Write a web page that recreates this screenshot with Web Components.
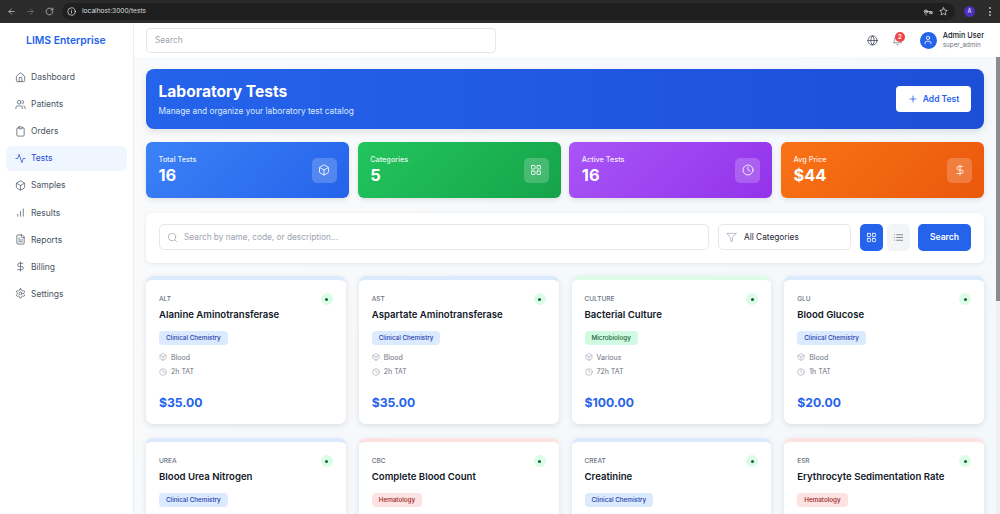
<!DOCTYPE html>
<html><head><meta charset="utf-8"><style>
html,body{margin:0;padding:0;height:514px;overflow:hidden;font-family:Inter,"Liberation Sans",sans-serif;background:#f9fafb}
lims-app{display:block;width:1000px;height:514px}
</style></head><body>
<lims-app></lims-app>
<script>
const I={
home:'<path d="M15 21v-8a1 1 0 0 0-1-1h-4a1 1 0 0 0-1 1v8"/><path d="M3 10a2 2 0 0 1 .709-1.528l7-5.999a2 2 0 0 1 2.582 0l7 5.999A2 2 0 0 1 21 10v9a2 2 0 0 1-2 2H5a2 2 0 0 1-2-2z"/>',
users:'<path d="M16 21v-2a4 4 0 0 0-4-4H6a4 4 0 0 0-4 4v2"/><circle cx="9" cy="7" r="4"/><path d="M22 21v-2a4 4 0 0 0-3-3.87"/><path d="M16 3.13a4 4 0 0 1 0 7.75"/>',
clip:'<rect x="8" y="2" width="8" height="4" rx="1"/><path d="M16 4h2a2 2 0 0 1 2 2v14a2 2 0 0 1-2 2H6a2 2 0 0 1-2-2V6a2 2 0 0 1 2-2h2"/>',
activity:'<path d="M22 12h-4l-3 9L9 3l-3 9H2"/>',
box:'<path d="M21 8a2 2 0 0 0-1-1.73l-7-4a2 2 0 0 0-2 0l-7 4A2 2 0 0 0 3 8v8a2 2 0 0 0 1 1.73l7 4a2 2 0 0 0 2 0l7-4A2 2 0 0 0 21 16Z"/><path d="m3.3 7 8.7 5 8.7-5"/><path d="M12 22V12"/>',
chart:'<path d="M12 20V10"/><path d="M18 20V4"/><path d="M6 20v-4"/>',
file:'<path d="M15 2H6a2 2 0 0 0-2 2v16a2 2 0 0 0 2 2h12a2 2 0 0 0 2-2V7Z"/><path d="M14 2v4a2 2 0 0 0 2 2h4"/><path d="M16 13H8"/><path d="M16 17H8"/><path d="M10 9H8"/>',
dollar:'<path d="M12 2v20"/><path d="M17 5H9.5a3.5 3.5 0 0 0 0 7h5a3.5 3.5 0 0 1 0 7H6"/>',
gear:'<path d="M12.22 2h-.44a2 2 0 0 0-2 2v.18a2 2 0 0 1-1 1.73l-.43.25a2 2 0 0 1-2 0l-.15-.08a2 2 0 0 0-2.73.73l-.22.38a2 2 0 0 0 .73 2.73l.15.1a2 2 0 0 1 1 1.72v.51a2 2 0 0 1-1 1.74l-.15.09a2 2 0 0 0-.73 2.73l.22.38a2 2 0 0 0 2.73.73l.15-.08a2 2 0 0 1 2 0l.43.25a2 2 0 0 1 1 1.73V20a2 2 0 0 0 2 2h.44a2 2 0 0 0 2-2v-.18a2 2 0 0 1 1-1.73l.43-.25a2 2 0 0 1 2 0l.15.08a2 2 0 0 0 2.73-.73l.22-.39a2 2 0 0 0-.73-2.73l-.15-.08a2 2 0 0 1-1-1.74v-.5a2 2 0 0 1 1-1.74l.15-.09a2 2 0 0 0 .73-2.73l-.22-.38a2 2 0 0 0-2.73-.73l-.15.08a2 2 0 0 1-2 0l-.43-.25a2 2 0 0 1-1-1.73V4a2 2 0 0 0-2-2z"/><circle cx="12" cy="12" r="3"/>',
globe:'<circle cx="12" cy="12" r="10"/><path d="M12 2a14.5 14.5 0 0 0 0 20 14.5 14.5 0 0 0 0-20"/><path d="M2 12h20"/>',
bell:'<path d="M6 8a6 6 0 0 1 12 0c0 7 3 9 3 9H3s3-2 3-9"/><path d="M10.3 21a1.94 1.94 0 0 0 3.4 0"/>',
user:'<path d="M19 21v-2a4 4 0 0 0-4-4H9a4 4 0 0 0-4 4v2"/><circle cx="12" cy="7" r="4"/>',
grid:'<rect width="7" height="7" x="3" y="3" rx="1"/><rect width="7" height="7" x="14" y="3" rx="1"/><rect width="7" height="7" x="14" y="14" rx="1"/><rect width="7" height="7" x="3" y="14" rx="1"/>',
clock:'<circle cx="12" cy="12" r="10"/><path d="M12 6v6l4 2"/>',
plus:'<path d="M5 12h14"/><path d="M12 5v14"/>',
search:'<circle cx="11" cy="11" r="8"/><path d="m21 21-4.3-4.3"/>',
filter:'<path d="M22 3H2l8 9.46V19l4 2v-8.54z"/>',
list:'<path d="M8 6h13"/><path d="M8 12h13"/><path d="M8 18h13"/><path d="M3 6h.01"/><path d="M3 12h.01"/><path d="M3 18h.01"/>',
back:'<path d="M19 12H5"/><path d="m12 19-7-7 7-7"/>',
fwd:'<path d="M5 12h14"/><path d="m12 5 7 7-7 7"/>',
reload:'<path d="M21 12a9 9 0 1 1-3-6.7L21 8"/><path d="M21 3v5h-5"/>',
info:'<circle cx="12" cy="12" r="10"/><path d="M12 16v-5"/><path d="M12 8h.01"/>',
star:'<path d="m12 2 3.1 6.3 6.9 1-5 4.9 1.2 6.8-6.2-3.2L5.8 21 7 14.2 2 9.3l6.9-1z"/>',
key:'<circle cx="7" cy="11" r="4"/><circle cx="7" cy="11" r="1"/><path d="M11 11h11v5h-3v-3h-3v3"/><path d="M5 19h.01M9 19h.01"/>'
};
const svg=(n,s,c='currentColor',w=2)=>`<svg xmlns="http://www.w3.org/2000/svg" width="${s}" height="${s}" viewBox="0 0 24 24" fill="none" stroke="${c}" stroke-width="${w}" stroke-linecap="round" stroke-linejoin="round" style="display:block;flex:none">${I[n]}</svg>`;
function def(name,css,html){
  customElements.define(name,class extends HTMLElement{
    connectedCallback(){
      if(this.shadowRoot)return;
      const r=this.attachShadow({mode:'open'});
      const a={};for(const x of this.attributes)a[x.name]=x.value;
      r.innerHTML=`<style>${css}</style>`+(typeof html==='function'?html(a):html);
    }
  });
}
def('browser-bar',`:host{display:flex;align-items:center;height:23px;background:#2b2b2b;color:#c7c7c7;flex:none;box-sizing:border-box;padding:0 5px 0 2px}
.b{width:19px;display:flex;justify-content:center}.dim{color:#777}
.url{display:flex;align-items:center;flex:1;height:17px;background:#1f1f1f;border-radius:9px;margin-left:3px;padding:0 7px 0 5px;font:6.6px/1 Inter,sans-serif;color:#dcdcdc;gap:6px}
.sp{flex:1}.av{width:11px;height:11px;border-radius:50%;background:#4a2fb8;color:#d8d0ff;font:600 5.5px/11px Inter,sans-serif;text-align:center;margin:0 10px 0 9px}
.dots{width:10px;display:flex;flex-direction:column;gap:1.5px;align-items:center}.dots i{width:2px;height:2px;background:#bbb;border-radius:50%}`,
`<span class="b">${svg('back',9)}</span><span class="b dim">${svg('fwd',9)}</span><span class="b">${svg('reload',9)}</span>
<div class="url">${svg('info',9)}<span>localhost:3000/tests</span><span class="sp"></span>${svg('key',10)}${svg('star',9)}</div>
<span class="av">A</span><span class="dots"><i></i><i></i><i></i></span>`);
def('nav-item',`:host{display:flex;align-items:center;height:25px;gap:5px;padding:0 9px;border-radius:6px;font-size:8.5px;color:#4b5563;margin-bottom:2.1px}
:host([active]){background:#eff6ff;color:#1d4ed8}`,a=>`${svg(a.icon,11,'currentColor',1.6)}<span>${a.label}</span>`);
def('side-bar',`:host{display:block;width:134px;box-sizing:border-box;background:#fff;border-right:1px solid #eceef1;flex:none}
.logo{height:34px;display:flex;align-items:center;padding-left:26px;font-size:10.4px;font-weight:600;color:#2563eb}
nav{padding:7.6px 6px 0 6px;display:block}`,
`<div class="logo">LIMS Enterprise</div><nav>
<nav-item icon="home" label="Dashboard"></nav-item><nav-item icon="users" label="Patients"></nav-item><nav-item icon="clip" label="Orders"></nav-item><nav-item icon="activity" label="Tests" active></nav-item><nav-item icon="box" label="Samples"></nav-item><nav-item icon="chart" label="Results"></nav-item><nav-item icon="file" label="Reports"></nav-item><nav-item icon="dollar" label="Billing"></nav-item><nav-item icon="gear" label="Settings"></nav-item></nav>`);
def('top-bar',`:host{display:flex;align-items:center;height:34px;background:#fff;flex:none;padding:0 16px 0 12px;box-sizing:border-box}
.s{width:350px;height:25px;box-sizing:border-box;border:1px solid #e5e7eb;border-radius:4px;display:flex;align-items:center;padding-left:8px;font-size:8.3px;color:#9ca3af}
.sp{flex:1}.ic{color:#374151;position:relative}.bell{margin-left:16px;color:#6b7280}
.bd{position:absolute;top:-3px;right:-2px;width:10px;height:10px;border-radius:50%;background:#ef4444;color:#fff;font:600 6.5px/10px Inter,sans-serif;text-align:center}
.av{width:17px;height:17px;border-radius:50%;background:#2563eb;display:flex;align-items:center;justify-content:center;margin:0 6px 0 17px;color:#fff}
.n{font-size:7.4px;font-weight:500;color:#111827;line-height:10px}.r{font-size:6.3px;color:#6b7280;line-height:9px}`,
`<div class="s">Search</div><span class="sp"></span><span class="ic" style="margin-right:-1px;left:1px">${svg('globe',11,'currentColor',1.6)}</span>
<span class="ic bell">${svg('bell',11,'currentColor',1.6)}<span class="bd">2</span></span><span class="av">${svg('user',10,'#fff',2)}</span><div><div class="n">Admin User</div><div class="r">super_admin</div></div>`);
def('hero-banner',`:host{display:flex;align-items:center;justify-content:space-between;height:60px;border-radius:8px;padding:0 13px 0 12.5px;box-sizing:border-box;background:linear-gradient(90deg,#2563eb,#1d4ed8);box-shadow:0 3px 7px rgba(0,0,0,.1);color:#fff}
h1{margin:.5px 0 0;font-size:15.6px;font-weight:700;line-height:20px}p{margin:3.5px 0 0;font-size:8.3px;color:#dbeafe;line-height:12px}
.b{background:#fff;color:#2563eb;border-radius:4px;height:26px;width:75px;display:flex;align-items:center;justify-content:center;gap:5px;font-size:8.5px;font-weight:600}`,
`<div><h1>Laboratory Tests</h1><p>Manage and organize your laboratory test catalog</p></div><div class="b">${svg('plus',10,'#2563eb',2)}Add Test</div>`);
def('stat-card',`:host{display:flex;align-items:center;justify-content:space-between;height:56px;border-radius:6px;padding:0 12px 0 12.5px;box-sizing:border-box;color:#fff;box-shadow:0 2px 5px rgba(0,0,0,.1)}
.l{font-size:7.3px;line-height:9px;opacity:.88;font-weight:500}.v{font-size:16.4px;font-weight:700;line-height:20px;margin-top:1px}
.i{width:25px;height:25px;border-radius:5px;background:rgba(255,255,255,.2);display:flex;align-items:center;justify-content:center}`,
a=>`<div><div class="l">${a.label}</div><div class="v">${a.value}</div></div><div class="i">${svg(a.icon,12,'#fff',1.7)}</div>`);
def('filter-bar',`:host{display:flex;align-items:center;height:50px;border-radius:6px;background:#fff;padding:0 13px 2px 13px;box-sizing:border-box;box-shadow:0 1px 4px rgba(0,0,0,.08);gap:9px}
.f{height:26px;box-sizing:border-box;border:1px solid #e5e7eb;border-radius:5px;display:flex;align-items:center;font-size:8.3px}
.q{flex:1;padding-left:7px;gap:6px;color:#9ca3af}.c{width:133px;padding-left:7px;gap:7px;color:#1f2937}
.t{display:flex;gap:4px}.v{width:23px;height:27px;border-radius:5px;display:flex;align-items:center;justify-content:center}
.on{background:#2563eb}.off{background:#f3f4f6}
.go{width:53px;height:27px;margin-left:-1px;border-radius:5px;background:#2563eb;color:#fff;font-size:8.6px;font-weight:600;display:flex;align-items:center;justify-content:center}`,
`<div class="f q">${svg('search',11,'#9ca3af',1.6)}<span>Search by name, code, or description...</span></div>
<div class="f c">${svg('filter',11,'#9ca3af',1.5)}<span>All Categories</span></div>
<div class="t"><div class="v on">${svg('grid',11,'#fff',1.8)}</div><div class="v off">${svg('list',11,'#6b7280',1.8)}</div></div><div class="go">Search</div>`);
const P={chem:['#dbeafe','#1e40af','#dbeafe'],micro:['#d1fae5','#166534','#dcfce7'],hema:['#fee2e2','#991b1b','#fee2e2']};
def('test-card',`:host{display:block;position:relative;height:148px;border-radius:7px;background:#fff;box-shadow:0 2px 6px rgba(0,0,0,.1);box-sizing:border-box;padding:14.5px 13px 0;border-top:4px solid var(--bar);overflow:hidden}
.code{font-size:6.5px;color:#6b7280;line-height:9px;font-weight:500}
.dot{position:absolute;right:13px;top:13px;width:12px;height:12px;border-radius:50%;background:#dcfce7;display:flex;align-items:center;justify-content:center}.dot i{width:3px;height:3px;border-radius:50%;background:#166534}
h3{margin:4px 0 0;font-size:9.6px;line-height:14px;font-weight:600;color:#111827}
.pill{display:inline-block;margin-top:9.5px;height:14px;line-height:14px;padding:0 7px;border-radius:4px;font-size:6.3px;font-weight:500}
.r{display:flex;align-items:center;gap:4px;font-size:7px;color:#6b7280;height:14.5px}
.rs{margin-top:5px}
.price{margin-top:15px;font-size:12.2px;font-weight:700;color:#2563eb;line-height:18px}`,
a=>{const p=P[a.kind];return `<style>:host{--bar:${p[2]}}.pill{background:${p[0]};color:${p[1]}}</style><span class="dot"><i></i></span><div class="code">${a.code}</div><h3>${a.name}</h3><span class="pill">${a.cat}</span>
<div class="rs"><div class="r">${svg('box',8,'#9ca3af',1.8)}<span>${a.spec}</span></div><div class="r">${svg('clock',8,'#9ca3af',1.8)}<span>${a.tat} TAT</span></div></div><div class="price">${a.price}</div>`});
def('lims-app',`:host{display:flex;flex-direction:column;width:1000px;height:514px;overflow:hidden}
.row{flex:1;display:flex;min-height:0}.col{flex:1;display:flex;flex-direction:column;min-width:0;position:relative}
main{flex:1;overflow:hidden;padding:12px 16px 0 12px;background:linear-gradient(135deg,#f9fafb,#f3f8fc);box-sizing:border-box}
.stats{display:grid;grid-template-columns:repeat(4,1fr);gap:8.7px;margin-top:13px}.stats>:nth-child(1){background:linear-gradient(135deg,#3b82f6,#2563eb)}.stats>:nth-child(2){background:linear-gradient(135deg,#22c55e,#16a34a)}.stats>:nth-child(3){background:linear-gradient(135deg,#a855f7,#9333ea)}.stats>:nth-child(4){background:linear-gradient(135deg,#f97316,#ea580c)}
filter-bar{margin-top:15px}
.grid{display:grid;grid-template-columns:repeat(4,1fr);gap:14px 13px;margin-top:13px}
.sb{position:absolute;right:0;top:34px;bottom:0;width:4px;background:#f1f1f1}.sb i{display:block;width:4px;height:244px;background:#8c8c8c}`,
`<browser-bar></browser-bar><div class="row"><side-bar></side-bar><div class="col"><top-bar></top-bar><main>
<hero-banner></hero-banner>
<div class="stats"><stat-card label="Total Tests" value="16" icon="box"></stat-card><stat-card label="Categories" value="5" icon="grid"></stat-card><stat-card label="Active Tests" value="16" icon="clock"></stat-card><stat-card label="Avg Price" value="$44" icon="dollar"></stat-card></div>
<filter-bar></filter-bar>
<div class="grid">
<test-card kind="chem" code="ALT" name="Alanine Aminotransferase" cat="Clinical Chemistry" spec="Blood" tat="2h" price="$35.00"></test-card>
<test-card kind="chem" code="AST" name="Aspartate Aminotransferase" cat="Clinical Chemistry" spec="Blood" tat="2h" price="$35.00"></test-card>
<test-card kind="micro" code="CULTURE" name="Bacterial Culture" cat="Microbiology" spec="Various" tat="72h" price="$100.00"></test-card>
<test-card kind="chem" code="GLU" name="Blood Glucose" cat="Clinical Chemistry" spec="Blood" tat="1h" price="$20.00"></test-card>
<test-card kind="chem" code="UREA" name="Blood Urea Nitrogen" cat="Clinical Chemistry" spec="Blood" tat="2h" price="$25.00"></test-card>
<test-card kind="hema" code="CBC" name="Complete Blood Count" cat="Hematology" spec="Blood" tat="1h" price="$25.00"></test-card>
<test-card kind="chem" code="CREAT" name="Creatinine" cat="Clinical Chemistry" spec="Blood" tat="2h" price="$25.00"></test-card>
<test-card kind="hema" code="ESR" name="Erythrocyte Sedimentation Rate" cat="Hematology" spec="Blood" tat="2h" price="$15.00"></test-card>
</div></main><div class="sb"><i></i></div></div></div>`);
</script></body></html>
